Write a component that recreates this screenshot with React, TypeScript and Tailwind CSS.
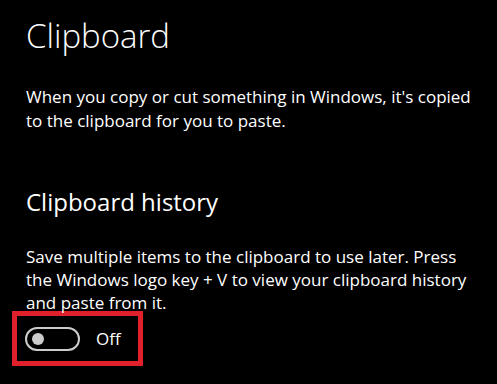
export default function App() {
  return (
    <div className="w-[497px] h-[384px] bg-black text-white overflow-hidden" style={{ fontFamily: '"Open Sans", "Noto Sans", sans-serif' }}>
      <div className="pl-[26px] pt-[14px]">
        <h1 className="text-[33px] leading-[44px] font-light">Clipboard</h1>
        <p className="mt-[27px] text-[17px] leading-[24px] w-[460px]">
          When you copy or cut something in Windows, it's copied to the clipboard for you to paste.
        </p>
        <h2 className="mt-[53px] text-[24px] leading-[32px] font-normal">Clipboard history</h2>
        <p className="mt-[27px] text-[17px] leading-[23px] w-[460px]">
          Save multiple items to the clipboard to use later. Press the Windows logo key + V to view your clipboard history and paste from it.
        </p>
        <div className="ml-[-14px] mt-[-3px] w-[131px] h-[55px] border-[5px] border-[#e0202a] flex items-center pl-[8px]">
          <div className="w-[55px] h-[24px] rounded-full border-2 border-[#cccccc] flex items-center pl-[5px]">
            <div className="w-[12px] h-[12px] rounded-full bg-[#cccccc]" />
          </div>
          <span className="ml-[16px] text-[17px] leading-[24px]">Off</span>
        </div>
      </div>
    </div>
  );
}
